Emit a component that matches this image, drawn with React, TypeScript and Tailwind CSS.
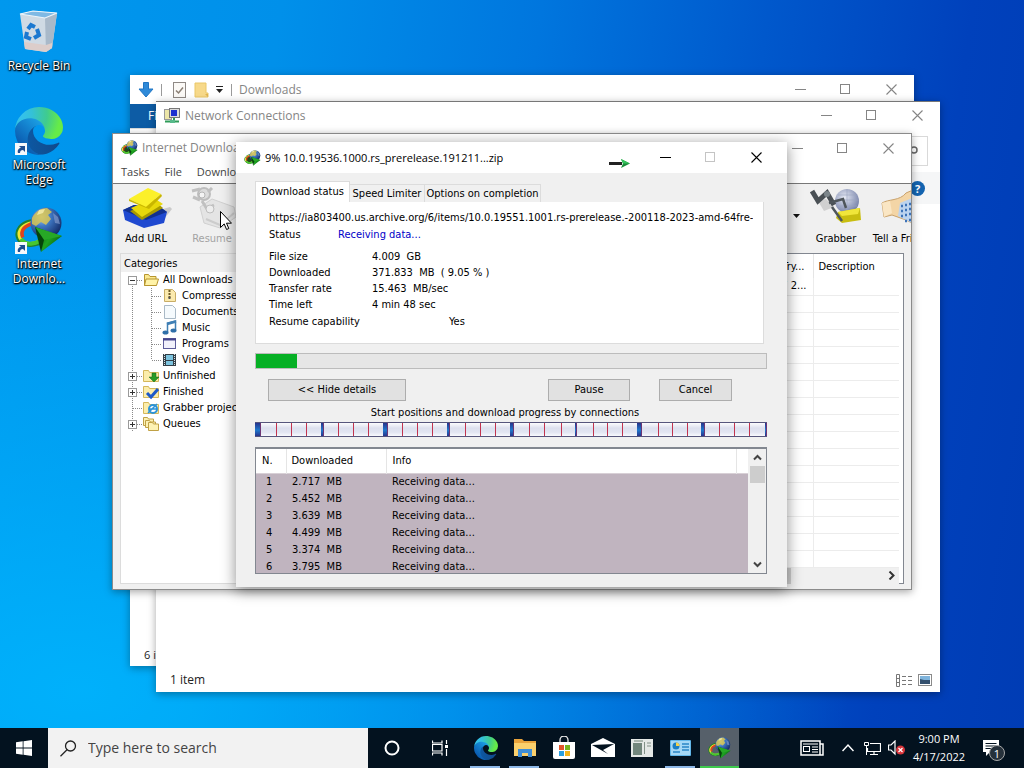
import type { ReactNode } from 'react';

/* ---------- logos and icons ---------- */

function EdgeLogo({ className }: { className: string }) {
  return (
    <svg viewBox="0 0 256 256" className={className} aria-hidden="true">
      <defs>
        <linearGradient id="edgeDark" x1="58" y1="177" x2="237" y2="177" gradientUnits="userSpaceOnUse">
          <stop offset="0" stopColor="#0c59a4" />
          <stop offset="1" stopColor="#114a8b" />
        </linearGradient>
        <linearGradient id="edgeMid" x1="153" y1="100" x2="46" y2="216" gradientUnits="userSpaceOnUse">
          <stop offset="0" stopColor="#1b9de2" />
          <stop offset="0.5" stopColor="#127cca" />
          <stop offset="1" stopColor="#0b5cb0" />
        </linearGradient>
        <radialGradient id="edgeTop" cx="26" cy="46" r="230" gradientUnits="userSpaceOnUse">
          <stop offset="0" stopColor="#35c1f1" />
          <stop offset="0.3" stopColor="#34c1d8" />
          <stop offset="0.65" stopColor="#3fcb8f" />
          <stop offset="0.95" stopColor="#66eb48" />
        </radialGradient>
      </defs>
      <g transform="translate(-4.63 -4.92)">
        <path fill="url(#edgeDark)" d="M235.68 195.46a93.73 93.73 0 0 1-10.54 4.71 101.87 101.87 0 0 1-35.9 6.46c-47.32 0-88.54-32.55-88.54-74.32A31.48 31.48 0 0 1 117.13 105c-42.8 1.8-53.8 46.4-53.8 72.53 0 73.88 68.09 81.37 82.76 81.37 7.91 0 19.84-2.3 27-4.56l1.31-.44a128.34 128.34 0 0 0 66.6-52.8 4 4 0 0 0-5.32-5.64Z" />
        <path fill="url(#edgeMid)" d="M110.34 246.34A79.2 79.2 0 0 1 87.6 225a80.72 80.72 0 0 1 29.53-120c3.12-1.47 8.45-4.13 15.54-4a32.35 32.35 0 0 1 25.69 13 31.88 31.88 0 0 1 6.36 18.66c0-.21 24.46-79.6-80-79.6-43.9 0-80 41.66-80 78.21a130.15 130.15 0 0 0 12.11 56 128 128 0 0 0 156.38 67.11 75.55 75.55 0 0 1-62.78-8Z" />
        <path fill="url(#edgeTop)" d="M156.94 153.78c-.81 1.05-3.3 2.5-3.3 5.66 0 2.61 1.7 5.12 4.72 7.23 14.38 10 41.49 8.68 41.56 8.68a59.56 59.56 0 0 0 30.27-8.35 61.38 61.38 0 0 0 30.43-52.88c.26-22.41-8-37.31-11.34-43.91C228.09 28.76 182.35 4.92 132.61 4.92a128 128 0 0 0-128 126.2c.48-36.54 36.8-66.05 80-66.05 3.5 0 23.46.34 42 10.07 16.34 8.58 24.9 18.94 30.85 29.21 6.18 10.67 7.28 24.15 7.28 29.52s-2.74 13.33-7.8 19.91Z" />
      </g>
    </svg>
  );
}

function IdmLogo({ className, small = false }: { className: string; small?: boolean }) {
  return (
    <svg viewBox="0 0 48 46" className={className} aria-hidden="true">
      <defs>
        <radialGradient id="idmGlobe" cx="0.35" cy="0.3" r="0.75">
          <stop offset="0" stopColor="#a9cdf0" />
          <stop offset="0.4" stopColor="#3f78c4" />
          <stop offset="1" stopColor="#132a66" />
        </radialGradient>
        <linearGradient id="idmArrow" x1="0" y1="0" x2="1" y2="0.6">
          <stop offset="0" stopColor="#064a08" />
          <stop offset="0.6" stopColor="#1ea322" />
          <stop offset="1" stopColor="#0a5c10" />
        </linearGradient>
      </defs>
      {small && <ellipse cx="17" cy="26" rx="13" ry="11" fill="#1f4a1c" />}
      <g fill="none" transform="rotate(-14 17 26)">
        <ellipse cx="17" cy="26" rx="15.500" ry="12.500" stroke="#23822b" strokeWidth="2.500" />
        <ellipse cx="17" cy="26" rx="13.200" ry="10.200" stroke="#f3e62e" strokeWidth="3" />
        <path d="M7 28 C6 20 12 17 22 17" stroke="#e2421c" strokeWidth="3.500" />
        <path d="M5 29 C8 38 20 38 28 33" stroke="#48c62f" strokeWidth="4" />
      </g>
      <circle cx="31" cy="16" r="15.500" fill="url(#idmGlobe)" />
      <path d="M17 11 C20 5 26 1 32 1 L37 5 L33 8 L36 12 L31 18 L26 15 L21 19 L17 17 Z" fill="#d9c552" opacity="0.85" />
      <path d="M24 3 L30 2 L28 6 L22 8 Z" fill="#f6efae" opacity="0.8" />
      <path d="M38 6 L43 10 L45 17 L40 16 Z" fill="#7f97cb" opacity="0.7" />
      <path d="M20 20 L47 29 L26 45 L28 33 Z" fill="url(#idmArrow)" />
      <path d="M20 20 L47 29 L29 33 Z" fill="#27a826" />
      <path d="M20 20 L29 33 L26 45 Z" fill="#05440a" />
    </svg>
  );
}

function RecycleBin() {
  return (
    <svg viewBox="0 0 40 44" className="h-11 w-10" aria-hidden="true">
      <path d="M1 4 L14 1 L38 3 L33 38 L27 42 L6 39 Z" fill="#cfdae4" />
      <path d="M26 8 L38 3 L33 38 L27 42 Z" fill="#a9b9c9" />
      <path d="M1 4 L14 1 L38 3 L26 8 Z" fill="#7fb9e4" stroke="#eef5fa" strokeWidth="1.200" />
      <path d="M5 32 L27 35 L33 33 L33 38 L27 42 L6 39 Z" fill="#dccdca" />
      <g fill="none" stroke="#1b78d0" strokeWidth="4">
        <path d="M9 19 L12 15 L16 17" />
        <path d="M18 19 L20 25 L15 28" />
        <path d="M12 29 L7 27 L8 22" />
      </g>
    </svg>
  );
}

function Shortcut() {
  return (
    <svg viewBox="0 0 12 12" className="absolute bottom-0 left-0 h-3 w-3" aria-hidden="true">
      <rect width="12" height="12" fill="#f5f8fb" />
      <path d="M3 10 C2 7 4 5 6 5 L4 3 H10 V9 L8 7 C6 7 5 8 5 10 Z" fill="#1f4f92" />
    </svg>
  );
}

function Svg({ size, children, className = '' }: { size: number; children: ReactNode; className?: string }) {
  return (
    <svg width={size} height={size} viewBox={`0 0 ${size} ${size}`} className={`shrink-0 ${className}`} aria-hidden="true">
      {children}
    </svg>
  );
}

/* ---------- window parts ---------- */

function Captions({ active = false, noMax = false }: { active?: boolean; noMax?: boolean }) {
  const tone = active ? 'text-black' : 'text-[#858585]';
  return (
    <div className={`ml-auto flex shrink-0 self-stretch ${tone}`}>
      <button type="button" aria-label="Minimize" className="grid w-[45px] place-items-center">
        <Svg size={11}><path d="M0 5.500h11" stroke="currentColor" /></Svg>
      </button>
      <button type="button" aria-label="Maximize" className={`grid w-[45px] place-items-center ${noMax ? 'text-[#c4c4c4]' : ''}`}>
        <Svg size={11}><rect x="0.500" y="0.500" width="9" height="9" fill="none" stroke="currentColor" /></Svg>
      </button>
      <button type="button" aria-label="Close" className="grid w-[46px] place-items-center">
        <Svg size={11}><path d="M0.500 0.500l10 10M10.500 0.500l-10 10" stroke="currentColor" strokeWidth="1.100" /></Svg>
      </button>
    </div>
  );
}

const shade = 'shadow-[0_2px_8px_rgba(0,0,0,0.35)]';

function DownloadsWindow() {
  return (
    <section aria-label="Downloads" className={`absolute left-[130px] top-[75px] flex h-[591px] w-[784px] flex-col bg-white ${shade}`}>
      <header className="flex h-[29px] items-center pl-2 text-xs text-[#858585]">
        <Svg size={16}><path d="M5.500 0.500h5v6.500h4.500L8 15 1 7h4.500z" fill="#2f8ad8" stroke="#2076c4" /></Svg>
        <span className="ml-[7px] h-3 w-px bg-[#9a9a9a]" />
        <Svg size={16} className="ml-[9px]"><rect x="2.500" y="0.500" width="12" height="15" fill="#fbf9f6" stroke="#8f8985" /><path d="M5 8.500l2.500 2.500L12 5.500" fill="none" stroke="#8a7f75" strokeWidth="1.500" /></Svg>
        <Svg size={16} className="ml-[7px]"><path d="M1 1h11v10h2v4H1z" fill="#f7d98a" stroke="#eac766" /><path d="M11 12h3v3" fill="#e0b450" /></Svg>
        <Svg size={9} className="ml-[5px]"><path d="M1 1.500h7" stroke="#222" /><path d="M1 4h7L4.500 8z" fill="#222" /></Svg>
        <span className="ml-[7px] h-3 w-px bg-[#9a9a9a]" />
        <h2 className="ml-[7px]">Downloads</h2>
        <Captions />
      </header>
      <div className="flex h-6 bg-white">
        <button type="button" className="w-[56px] bg-[#0d5ca5] pl-[18px] text-left text-xs text-white">File</button>
      </div>
      <div className="flex-1 border-t border-[#dadbdc] bg-white" />
      <footer className="flex h-[22px] items-center pl-[14px] text-[11px] text-[#222]">6 items</footer>
    </section>
  );
}

function NetworkWindow() {
  return (
    <section aria-label="Network Connections" className={`absolute left-[156px] top-[101px] flex h-[591px] w-[784px] flex-col bg-white ${shade}`}>
      <header className="flex h-7 items-center border-t border-[#777] pl-2 text-xs text-[#858585]">
        <Svg size={16}>
          <rect x="0.500" y="1.500" width="7" height="10" fill="#ece6a8" stroke="#999" />
          <rect x="5.500" y="0.500" width="10" height="9" fill="#dcdcdc" stroke="#777" />
          <rect x="7" y="2" width="6" height="6" fill="#1c2fd0" />
          <path d="M10 10v3M1 13.500h14" stroke="#2f9b58" strokeWidth="2" />
          <rect x="6" y="12" width="5" height="3" fill="#56b98a" />
        </Svg>
        <h2 className="ml-[5px]">Network Connections</h2>
        <Captions />
      </header>
      <div className="flex h-[43px] items-center pr-3">
        <label className="relative ml-auto flex h-[30px] w-[180px] items-center border border-[#d9d9d9]">
          <input aria-label="Search" className="w-full bg-transparent outline-none" />
          <Svg size={13} className="mr-1"><circle cx="4" cy="6" r="3" fill="none" stroke="#666" strokeWidth="1.500" /></Svg>
        </label>
      </div>
      <div className="flex h-8 items-center bg-[#f5f6f7] pr-[15px]">
        <button type="button" aria-label="Help" className="ml-auto grid h-[15px] w-[15px] place-items-center rounded-full bg-[#1464b0] text-[11px] font-bold leading-none text-white">?</button>
      </div>
      <div className="flex-1 bg-white" />
      <footer className="flex h-6 items-center gap-[6px] pl-[14px] pr-2 text-xs text-[#222]">
        <span className="mr-auto">1 item</span>
        <svg width="16" height="13" viewBox="0 0 16 13" aria-hidden="true">
          <path d="M0.500 0.500h3v12h-3zM0.500 4.500h3M0.500 8.500h3" fill="none" stroke="#777" />
          <path d="M6 2.500h4M12 2.500h4M6 6.500h4M12 6.500h4M6 10.500h4M12 10.500h4" stroke="#777" />
        </svg>
        <svg width="14" height="12" viewBox="0 0 14 12" aria-hidden="true">
          <rect x="0.500" y="0.500" width="13" height="11" fill="#fff" stroke="#8a8a8a" />
          <rect x="2" y="2" width="10" height="4" fill="#7fb4dc" />
          <path d="M2 5l4 1h6v4H2z" fill="#33506e" />
        </svg>
      </footer>
    </section>
  );
}

/* ---------- IDM main window ---------- */

type Guide = 'minus' | 'plus' | 'tee' | 'line' | 'end' | 'none';

function TreeGuide({ kind }: { kind: Guide }) {
  const boxed = kind === 'minus' || kind === 'plus';
  return (
    <svg width="19" height="16" viewBox="0 0 19 16" className="shrink-0" aria-hidden="true">
      {kind !== 'none' && (
        <path d={kind === 'end' ? 'M8.500 0v8' : kind === 'minus' ? 'M8.500 8v8' : 'M8.500 0v16'} stroke="#8a8a8a" strokeDasharray="1 1" />
      )}
      {kind !== 'none' && kind !== 'line' && <path d="M9 8.500h10" stroke="#8a8a8a" strokeDasharray="1 1" />}
      {boxed && <rect x="4.500" y="4.500" width="8" height="8" fill="#fff" stroke="#9a9a9a" />}
      {boxed && <path d="M6 8.500h5" stroke="#333" />}
      {kind === 'plus' && <path d="M8.500 6v5" stroke="#333" />}
    </svg>
  );
}

const folder = (
  <>
    <path d="M1.500 13.500v-11h4l1.500 2h6v9z" fill="#fbe98f" stroke="#b7952f" />
    <path d="M3 7h12.500l-2 6.500h-12z" fill="#fff3a8" stroke="#b7952f" />
  </>
);
const plainFolder = <path d="M0.500 13.500v-11h5l1 2h9v9z" fill="#fbedab" stroke="#d5b75a" />;

const tree: { name: string; guides: Guide[]; icon: ReactNode }[] = [
  { name: 'All Downloads', guides: ['minus'], icon: folder },
  { name: 'Compressed', guides: ['line', 'tee'], icon: <><path d="M2.500 1.500h8l3 3v9h-11z" fill="#fbeaae" stroke="#c8ad66" /><path d="M7.500 2v9" stroke="#6f5b25" strokeWidth="2" strokeDasharray="2 1" /><rect x="6.500" y="9" width="2" height="2" fill="#555" /></> },
  { name: 'Documents', guides: ['line', 'tee'], icon: <path d="M2.500 1.500h8l3 3v10h-11z" fill="#f5fafd" stroke="#a9b9c6" /> },
  { name: 'Music', guides: ['line', 'tee'], icon: <><path d="M5.500 12V3l8-2v9" fill="none" stroke="#3f7fb5" strokeWidth="1.500" /><path d="M5 4l9-2.500" stroke="#3f7fb5" strokeWidth="2.500" /><ellipse cx="3.500" cy="12.500" rx="3" ry="2" fill="#2f6fa8" /><ellipse cx="11.500" cy="10.500" rx="3" ry="2" fill="#2f6fa8" /></> },
  { name: 'Programs', guides: ['line', 'tee'], icon: <><rect x="1.500" y="2.500" width="12" height="10" fill="#f1f1fb" stroke="#5d5d9a" /><path d="M1 3.500h13" stroke="#44448c" strokeWidth="2" /></> },
  { name: 'Video', guides: ['line', 'end'], icon: <><rect x="1" y="2" width="13" height="12" fill="#333f46" /><rect x="4" y="3" width="7" height="5" fill="#7cc3de" /><rect x="4" y="9" width="7" height="4" fill="#7cc3de" /><path d="M2.500 2v12M12.500 2v12" stroke="#d6e2e8" strokeDasharray="1 1" /></> },
  { name: 'Unfinished', guides: ['plus'], icon: <>{plainFolder}<path d="M9 5h4v4h3l-5 5-5-5h3z" fill="#299b28" stroke="#146414" strokeWidth="0.500" /></> },
  { name: 'Finished', guides: ['plus'], icon: <>{plainFolder}<path d="M4 9l4 4 7-8" fill="none" stroke="#1d59c8" strokeWidth="3" /></> },
  { name: 'Grabber projects', guides: ['tee'], icon: <>{plainFolder}<circle cx="10" cy="9" r="4" fill="#fff" stroke="#2b93d8" strokeWidth="2" /><path d="M7 9h6M14 4l-9 9" stroke="#2b93d8" strokeWidth="1.500" /></> },
  { name: 'Queues', guides: ['plus'], icon: <><path d="M0.500 9.500v-8h4l1 1.500h5v6.500z" fill="#fdf2b4" stroke="#c0a145" /><path d="M2.500 11.500v-7h4l1 1.500h5v5.500z" fill="#fdf2b4" stroke="#c0a145" /><path d="M5.500 14.500v-8h4l1 1.500h5v6.500z" fill="#fdf2b4" stroke="#c0a145" /></> },
];

function ToolButton({ label, muted, children }: { label: string; muted?: boolean; children: ReactNode }) {
  return (
    <button type="button" className={`flex w-[66px] shrink-0 flex-col items-center whitespace-nowrap ${muted ? 'text-[#a3a3a3]' : 'text-black'}`}>
      <svg width="52" height="44" viewBox="0 0 52 44" aria-hidden="true">{children}</svg>
      <span className="leading-4">{label}</span>
    </button>
  );
}

const blankRows = Array.from({ length: 16 }, (_, i) => i);

function IdmWindow() {
  return (
    <section aria-label="Internet Download Manager" className={`absolute left-[112px] top-[133px] flex h-[457px] w-[800px] flex-col overflow-hidden border border-[#8b8b8b] bg-[#f0f0f0] ${shade}`}>
      <header className="flex h-7 items-center bg-white pl-2 text-xs text-[#858585]">
        <IdmLogo small className="h-4 w-[17px]" />
        <h2 className="ml-1 whitespace-nowrap">Internet Download Manager</h2>
        <Captions />
      </header>
      <nav className="flex h-[22px] items-center gap-[15px] border-b border-[#777] bg-white pl-2 text-[11px] text-[#444]">
        <button type="button">Tasks</button>
        <button type="button">File</button>
        <button type="button">Downloads</button>
      </nav>
      <div className="flex h-[69px] w-[calc(100%+24px)] pt-[3px] font-['DejaVu_Sans_Condensed','DejaVu_Sans',sans-serif] text-[11px]">
        <ToolButton label="Add URL">
          <path d="M36 24 L50 20 L52 22 L44 32 L30 36 Z" fill="#b9b9b9" opacity="0.7" />
          <path d="M3 23 L5 33 L24 41 L44 36 L47 25 L40 20 L14 18 Z" fill="#1f49d0" />
          <path d="M3 23 L14 18 L40 20 L47 25 L26 33 Z" fill="#12308f" />
          <path d="M10 24 L36 15 L43 21 L22 33 Z" fill="#a89a00" />
          <path d="M11 21 L34 11 L43 17 L22 30 Z" fill="#e8d80a" />
          <path d="M9 12 L28 1 L41 7 L26 20 Z" fill="#fbf02a" />
          <path d="M26 20 L41 7 L42 9 L29 22 L9 14 L9 12 Z" fill="#c9b600" />
        </ToolButton>
        <ToolButton label="Resume" muted>
          <path d="M14 20 L26 12 L48 20 L50 30 L34 41 L18 36 Z" fill="#e4e4e4" stroke="#d0d0d0" />
          <circle cx="18" cy="7" r="6" fill="#dcdcdc" stroke="#bdbdbd" strokeWidth="2" />
          <circle cx="16" cy="8" r="3" fill="#f4f4f4" stroke="#b5b5b5" />
          <path d="M6 4 L14 2 M7 10 L14 13 M16 14 L21 22 M22 5 L26 1 M20 22 L28 18" stroke="#c0c0c0" strokeWidth="3" />
          <circle cx="24" cy="22" r="4" fill="#ededed" stroke="#bdbdbd" />
          <path d="M20 32 L34 38 L48 26" fill="none" stroke="#cccccc" strokeWidth="2" />
        </ToolButton>
        <div className="flex-1" />
        <Svg size={7} className="mr-[3px] mt-[26px]"><path d="M0 1h7L3.500 5z" fill="#111" /></Svg>
        <ToolButton label="Grabber">
          <defs>
            <radialGradient id="grabGlobe" cx="0.4" cy="0.35" r="0.7">
              <stop offset="0" stopColor="#e6eaf4" />
              <stop offset="1" stopColor="#6f7ba4" />
            </radialGradient>
          </defs>
          <path d="M8 14 L16 12 L24 20 L14 24 Z" fill="#d0d0d0" />
          <circle cx="37" cy="14" r="12" fill="url(#grabGlobe)" />
          <path d="M26 13 H49 M28 8 H46 M28 19 H47 M37 2 V26" stroke="#9ba5c0" strokeWidth="0.600" fill="none" />
          <path d="M28 25 L50 21 L51 33 L32 36 L26 31 Z" fill="#c9be10" />
          <path d="M28 25 L50 21 L48 27 L32 29 Z" fill="#f0e63a" />
          <path d="M2 4 L8 14 L17 6 L24 18" fill="none" stroke="#4a5055" strokeWidth="5" />
          <path d="M19 16 L33 12 L36 21 M22 20 L32 34" fill="none" stroke="#4f565b" strokeWidth="2.500" />
          <circle cx="17" cy="7" r="3" fill="#7d868b" />
        </ToolButton>
        <ToolButton label="Tell a Friend">
          <path d="M6 16 C12 12 24 14 30 6 L44 0 V40 L30 33 L16 28 L8 30 Z" fill="#f3d5a6" stroke="#c9a26c" />
          <path d="M6 16 L8 30 L16 26 L14 14 Z" fill="#fae6c4" />
          <path d="M24 16 L44 8 V40 L22 29 Z" fill="#bcd3ee" />
          <path d="M25 19h2m2-1h2m2-1h2m-10 7h2m2-1h2m2-1h2m-10 7h2m2-1h2m2-1h2m-6 7h2m2-1h2" stroke="#3d73b8" strokeWidth="2.500" />
        </ToolButton>
      </div>
      <div className="flex min-h-0 flex-1 gap-1 px-[7px] pb-[5px] font-['DejaVu_Sans_Condensed','DejaVu_Sans',sans-serif] text-[11px] leading-4">
        <div className="flex w-[160px] shrink-0 flex-col overflow-hidden border border-[#dcdcdc] bg-white">
          <div className="bg-[#f0f0f0] pl-[3px] pt-px leading-[17px] text-black">Categories</div>
          <ul className="pl-[3px]">
            {tree.map((n) => (
              <li key={n.name} className="flex h-4 items-center whitespace-nowrap">
                {n.guides.map((g, i) => <TreeGuide key={i} kind={g} />)}
                <Svg size={16}>{n.icon}</Svg>
                <span className="ml-1">{n.name}</span>
              </li>
            ))}
          </ul>
        </div>
        <div className="flex min-w-0 flex-1 flex-col border border-[#828790] bg-white pr-1">
          <table className="w-full table-fixed border-collapse text-left">
            <thead>
              <tr className="h-6">
                <th aria-label="File name" />
                <th className="w-16 border-r border-[#e5e5e5] pr-2 pt-[2px] text-right font-normal">Last Try...</th>
                <th className="w-[86px] pl-[5px] pt-[2px] font-normal">Description</th>
              </tr>
            </thead>
            <tbody>
              <tr className="h-[17px] border-b border-[#ececec]">
                <td />
                <td className="border-r border-[#ececec] p-0 pr-[6px] text-right">Apr 17 2...</td>
                <td />
              </tr>
              {blankRows.map((i) => (
                <tr key={i} className="h-[17px] border-b border-[#ececec]">
                  <td />
                  <td className="border-r border-[#ececec]" />
                  <td />
                </tr>
              ))}
            </tbody>
          </table>
          <div className="mt-auto flex h-4 shrink-0 items-center bg-[#f0f0f0] pr-[3px]">
            <span className="h-4 flex-1 bg-[#cdcdcd]" />
            <span className="w-24" />
            <Svg size={9}><path d="M2.500 0.500l4 4-4 4" fill="none" stroke="#333" strokeWidth="2" /></Svg>
          </div>
        </div>
      </div>
    </section>
  );
}

/* ---------- download dialog ---------- */

const details: { label: string; value: string }[] = [
  { label: 'File size', value: '4.009  GB' },
  { label: 'Downloaded', value: '371.833  MB  ( 9.05 % )' },
  { label: 'Transfer rate', value: '15.463  MB/sec' },
  { label: 'Time left', value: '4 min 48 sec' },
];

const connections = ['2.717', '5.452', '3.639', '4.499', '3.374', '3.795'];

const redTicks = [21, 36, 51, 83, 98, 113, 147, 162, 177, 210, 225, 240, 274, 289, 306, 338, 352, 367, 403, 417, 432, 464, 479, 494];
const doneBlocks: [number, number][] = [[0, 6], [66, 3], [128, 5], [192, 3], [255, 4], [320, 2], [382, 5], [446, 4], [510, 2]];

function ConnectionsBar() {
  return (
    <svg viewBox="0 0 512 15" preserveAspectRatio="none" className="h-[15px] w-full" role="img" aria-label="Progress by connections">
      <defs>
        <linearGradient id="barBack" x1="0" y1="0" x2="0" y2="1">
          <stop offset="0" stopColor="#ffffff" />
          <stop offset="0.4" stopColor="#dde0ee" />
          <stop offset="0.7" stopColor="#e2e5f2" />
          <stop offset="1" stopColor="#fcfcff" />
        </linearGradient>
        <linearGradient id="barDone" x1="0" y1="0" x2="0" y2="1">
          <stop offset="0" stopColor="#27348c" />
          <stop offset="0.55" stopColor="#1f78cc" />
          <stop offset="1" stopColor="#27348c" />
        </linearGradient>
      </defs>
      <rect x="0.500" y="0.500" width="511" height="14" fill="url(#barBack)" stroke="#56567c" />
      {redTicks.map((x) => <rect key={x} x={x} y="1" width="1" height="13" fill="#c2334e" />)}
      {doneBlocks.map(([x, w]) => (
        <g key={x}>
          <rect x={x} y="1" width={w} height="13" fill="url(#barDone)" />
          <rect x={x + w - 1} y="1" width="1" height="13" fill="#6d3574" />
        </g>
      ))}
    </svg>
  );
}

const pushButton = 'h-[22px] border border-[#adadad] bg-[#e1e1e1] text-center text-black';

function DownloadDialog() {
  return (
    <section
      role="dialog"
      aria-label="Download progress"
      className="absolute left-[236px] top-[142px] flex h-[445px] w-[551px] flex-col bg-[#f0f0f0] font-['DejaVu_Sans_Condensed','DejaVu_Sans',sans-serif] text-[11px] leading-4 text-black shadow-[0_3px_14px_rgba(0,0,0,0.45)]"
    >
      <header className="flex h-[31px] shrink-0 items-center bg-white pl-2 pr-2 font-['Open_Sans','Noto_Sans',sans-serif]">
        <IdmLogo small className="h-4 w-[17px]" />
        <h1 className="ml-1 whitespace-nowrap">9% 10.0.19536.1000.rs_prerelease.191211...zip</h1>
        <svg width="22" height="10" viewBox="0 0 22 10" className="ml-auto mr-3 mt-3 shrink-0" aria-hidden="true">
          <rect x="0" y="3" width="13" height="3" fill="#222" />
          <path d="M12 0l9 4.500-9 4.500 2-4.500z" fill="#1a8f3a" />
          <path d="M12 0l9 4.500h-7z" fill="#35c45c" />
        </svg>
        <div className="flex self-stretch"><Captions active noMax /></div>
      </header>

      <div role="tablist" className="flex shrink-0 items-end pl-[19px] pt-2">
        <button role="tab" aria-selected="true" type="button" className="h-[21px] w-[95px] border border-b-0 border-[#dcdcdc] bg-white">Download status</button>
        <button role="tab" aria-selected="false" type="button" className="h-[18px] w-[75px] whitespace-nowrap border border-l-0 border-b-0 border-[#dcdcdc]">Speed Limiter</button>
        <button role="tab" aria-selected="false" type="button" className="h-[18px] w-[116px] whitespace-nowrap border border-l-0 border-b-0 border-[#dcdcdc]">Options on completion</button>
      </div>
      <div className="ml-[19px] mr-[23px] h-[142px] shrink-0 border border-t-0 border-[#dcdcdc] bg-white pl-[13px] pr-[10px] pt-2">
        <p className="overflow-hidden whitespace-nowrap">https://ia803400.us.archive.org/6/items/10.0.19551.1001.rs-prerelease.-200118-2023-amd-64fre-client</p>
        <dl>
          <div className="flex pt-px">
            <dt className="w-[69px]">Status</dt>
            <dd className="text-[#0000c8]">Receiving data...</dd>
          </div>
          <div className="pt-[6px]">
            {details.map((d) => (
              <div key={d.label} className="flex">
                <dt className="w-[103px]">{d.label}</dt>
                <dd className="whitespace-pre">{d.value}</dd>
              </div>
            ))}
          </div>
          <div className="flex pt-px">
            <dt className="w-[180px]">Resume capability</dt>
            <dd>Yes</dd>
          </div>
        </dl>
      </div>

      <div className="flex min-h-0 flex-1 flex-col pb-[13px] pl-[19px] pr-5 pt-[9px]">
        <div role="progressbar" aria-label="Downloaded" aria-valuenow={8} className="h-4 shrink-0 border border-[#bcbcbc] bg-[#e6e6e6]">
          <div className="h-full bg-[#06b025]" style={{ width: '8%' }} />
        </div>
        <div className="mt-[10px] flex shrink-0 pl-[13px] pr-[35px]">
          <button type="button" className={`${pushButton} w-[138px]`}>&lt;&lt; Hide details</button>
          <button type="button" className={`${pushButton} ml-auto w-[82px]`}>Pause</button>
          <button type="button" className={`${pushButton} ml-[29px] w-[73px]`}>Cancel</button>
        </div>
        <p className="mt-1 shrink-0 pr-3 text-center">Start positions and download progress by connections</p>
        <div className="mt-px flex shrink-0"><ConnectionsBar /></div>
        <div className="mt-[10px] flex min-h-0 flex-1 overflow-hidden border border-t-2 border-[#828790] bg-white">
          <div className="min-w-0 flex-1 overflow-hidden">
            <table className="w-full table-fixed border-collapse text-left">
              <thead>
                <tr className="h-6 border-b border-[#d8d0d6]">
                  <th className="w-[30px] border-r border-[#e5e5e5] p-0 pl-[6px] font-normal">N.</th>
                  <th className="w-[100px] border-r border-[#e5e5e5] p-0 pl-[5px] font-normal">Downloaded</th>
                  <th className="p-0 pl-[6px] font-normal">Info</th>
                  <th aria-label="End" className="w-3 border-l border-[#e5e5e5] p-0" />
                </tr>
              </thead>
              <tbody className="bg-[#c0b4bf]">
                {connections.map((c, i) => (
                  <tr key={c} className="h-[17px]">
                    <td className="p-0 pl-[10px]">{i + 1}</td>
                    <td className="whitespace-pre p-0 pl-[6px]">{`${c}  MB`}</td>
                    <td className="p-0 pl-[6px]" colSpan={2}>Receiving data...</td>
                  </tr>
                ))}
              </tbody>
            </table>
          </div>
          <div className="flex w-[18px] shrink-0 flex-col items-center bg-[#f0f0f0] py-1">
            <Svg size={9}><path d="M1 6.500l3.500-3.500L8 6.500" fill="none" stroke="#444" strokeWidth="2" /></Svg>
            <span className="mt-1 h-[17px] w-[15px] bg-[#cdcdcd]" />
            <Svg size={9} className="mt-auto"><path d="M1 2.500l3.500 3.500L8 2.500" fill="none" stroke="#444" strokeWidth="2" /></Svg>
          </div>
        </div>
      </div>
    </section>
  );
}

/* ---------- desktop and taskbar ---------- */

function DesktopIcon({ label, children }: { label: string; children: ReactNode }) {
  return (
    <button type="button" className="flex h-[99px] w-[78px] flex-col items-center gap-[2px] text-xs leading-[15px] text-white [text-shadow:0_1px_2px_#000,0_0_2px_#000,1px_1px_1px_#000]">
      <span className="relative grid h-12 w-12 place-items-center">{children}</span>
      <span className="w-16 text-center">{label}</span>
    </button>
  );
}

function TaskItem({ label, running = false, current = false, children }: { label: string; running?: boolean; current?: boolean; children: ReactNode }) {
  return (
    <button type="button" aria-label={label} className={`relative grid h-10 w-[39px] shrink-0 place-items-center ${current ? 'bg-[#56606a]' : ''}`}>
      {children}
      {running && <span className="absolute bottom-0 left-1 h-[2px] w-[30px] bg-[#8db8e8]" />}
      {current && <span className="absolute bottom-0 left-0 h-[2px] w-full bg-[#3fca4e]" />}
    </button>
  );
}

function Taskbar() {
  return (
    <footer className="flex h-10 items-center bg-[#03121f] text-white">
      <button type="button" aria-label="Start" className="grid h-10 w-12 place-items-center">
        <Svg size={16}><path d="M0 2.300L6.700 1.300V7.600H0zM7.500 1.200L16 0v7.600H7.500zM0 8.400h6.700v6.300L0 13.700zM7.500 8.400H16V16l-8.500-1.200z" fill="#fff" /></Svg>
      </button>
      <label className="flex h-10 w-80 shrink-0 items-center bg-[#f2f2f2] pl-3">
        <svg width="17" height="17" viewBox="0 0 17 17" aria-hidden="true"><circle cx="10.500" cy="6" r="5" fill="none" stroke="#222" strokeWidth="1.300" /><path d="M7 9.700L0.500 16.200" stroke="#222" strokeWidth="1.300" /></svg>
        <input aria-label="Search" placeholder="Type here to search" className="ml-[11px] w-60 bg-transparent text-sm outline-none placeholder:text-[#444]" />
      </label>
      <div className="ml-1 flex">
        <TaskItem label="Cortana"><Svg size={16}><circle cx="8" cy="8" r="6.500" fill="none" stroke="#fff" strokeWidth="2" /></Svg></TaskItem>
        <div className="ml-[9px] flex">
          <TaskItem label="Task view">
            <Svg size={16}><path d="M0.500 0.500v2.500h9.500V0.500M0.500 15.500V13h9.500v2.500M0.500 4.500h9.500v6.500H0.500zM14.500 0v4M14.500 9v7" fill="none" stroke="#fff" strokeWidth="1.200" /><rect x="13" y="5" width="3" height="3" fill="#fff" /></Svg>
          </TaskItem>
        </div>
        <div className="ml-[7px] flex">
          <TaskItem label="Edge" running><EdgeLogo className="h-6 w-6" /></TaskItem>
          <TaskItem label="File Explorer" running>
            <svg width="22" height="20" viewBox="0 0 22 20" aria-hidden="true">
              <path d="M0 1h8l2 2h12v15H0z" fill="#e9a33b" />
              <path d="M0 5h22v13H0z" fill="#fbd06c" />
              <path d="M4 19v-8h14v8h-4v-4H8v4z" fill="#3f8ed6" />
            </svg>
          </TaskItem>
          <TaskItem label="Store">
            <svg width="24" height="24" viewBox="0 0 24 24" aria-hidden="true">
              <path d="M8 7V4a4 4 0 0 1 8 0v3" fill="none" stroke="#e8e8e8" strokeWidth="1.300" />
              <path d="M1 6h22v15q0 2-2 2H3q-2 0-2-2z" fill="#fff" />
              <rect x="7" y="9" width="5" height="5" fill="#e2562b" /><rect x="13" y="9" width="5" height="5" fill="#78b51e" />
              <rect x="7" y="15" width="5" height="5" fill="#2a9fe0" /><rect x="13" y="15" width="5" height="5" fill="#f2b41e" />
            </svg>
          </TaskItem>
          <TaskItem label="Mail">
            <svg width="24" height="20" viewBox="0 0 24 20" aria-hidden="true"><path d="M0 6l12-6 12 6v13H0z" fill="#fff" /><path d="M1 7l22-1-11 6 5 4z" fill="#03121f" /></svg>
          </TaskItem>
          <TaskItem label="Viewer">
            <svg width="22" height="18" viewBox="0 0 22 18" aria-hidden="true"><rect width="22" height="18" fill="#e4e8e6" /><rect x="2" y="4" width="9" height="12" fill="#71867c" /><rect x="3" y="1" width="9" height="2" fill="#a9b5ae" /><path d="M13.500 3v12M16 4h4M16 7h4" stroke="#829188" /></svg>
          </TaskItem>
          <TaskItem label="Control Panel" running>
            <svg width="21" height="16" viewBox="0 0 21 16" aria-hidden="true"><rect width="21" height="16" rx="1" fill="#62b7ea" /><rect x="1" y="1" width="19" height="14" fill="#a5d8f6" /><circle cx="6" cy="6" r="3.500" fill="#1b7fc4" /><path d="M6 6V2.500A3.500 3.500 0 0 1 9.500 6z" fill="#f4d24c" /><path d="M12 4h7M12 7h7M12 10h7M3 12h7" stroke="#2a85c6" strokeWidth="1.500" /></svg>
          </TaskItem>
          <TaskItem label="Internet Download Manager" current><IdmLogo className="h-[22px] w-[23px]" /></TaskItem>
        </div>
      </div>
      <div className="ml-auto flex items-center">
        <svg width="24" height="16" viewBox="0 0 24 16" aria-hidden="true">
          <path d="M1 1h19v14H1zM20 4h3v11h-4" fill="none" stroke="#fff" strokeWidth="1.500" />
          <rect x="3.500" y="6.500" width="6" height="5" fill="none" stroke="#fff" />
          <path d="M3 4h15M12 7h6M12 9.500h6M12 12h6" stroke="#fff" strokeWidth="1.200" />
        </svg>
        <Svg size={12} className="ml-[18px]"><path d="M0.500 9l5.500-6 5.500 6" fill="none" stroke="#fff" strokeWidth="1.500" /></Svg>
        <svg width="17" height="15" viewBox="0 0 17 15" className="ml-[10px]" aria-hidden="true">
          <path d="M6 2.500h10.500v8H3.500V7M10 10.500v3M6 13.500h8" fill="none" stroke="#fff" strokeWidth="1.200" />
          <path d="M0.500 1.500h4v3h-4zM2.500 5v9" fill="none" stroke="#fff" />
        </svg>
        <svg width="18" height="16" viewBox="0 0 18 16" className="ml-[7px]" aria-hidden="true">
          <path d="M0.500 5v5h2.500l4 4V1L3 5z" fill="none" stroke="#fff" strokeWidth="1.200" />
          <circle cx="12.500" cy="10" r="4.500" fill="#d8343a" />
          <path d="M10.500 8l4 4M14.500 8l-4 4" stroke="#fff" strokeWidth="1.200" />
        </svg>
        <time className="w-[66px] text-center text-[11px] leading-[18px]">9:00 PM<br />4/17/2022</time>
        <div className="relative ml-2 w-11">
          <svg width="18" height="18" viewBox="0 0 18 18" className="ml-[2px]" aria-hidden="true"><path d="M1 1h16v12H8l-4 4v-4H1z" fill="#fff" /><path d="M3.500 4.500h11M3.500 7h11M3.500 9.500h8" stroke="#03121f" strokeWidth="1.200" /></svg>
          <span className="absolute left-[9px] top-[6px] grid h-4 w-4 place-items-center rounded-full border border-[#a8a8a8] bg-[#26313b] text-[11px] leading-none">1</span>
        </div>
      </div>
    </footer>
  );
}

export default function App() {
  return (
    <main className="flex min-h-screen flex-col overflow-hidden bg-[radial-gradient(75%_60%_at_8%_90%,rgba(0,184,255,0.8)_0%,rgba(0,184,255,0)_100%),linear-gradient(98deg,#0098ee_0%,#0090ea_25%,#0076de_48%,#0058cc_68%,#0041bc_86%,#003cb4_100%)] font-['Open_Sans','Noto_Sans',sans-serif]">
      <div className="relative flex-1">
        <div className="flex flex-col pt-2">
          <DesktopIcon label="Recycle Bin"><RecycleBin /></DesktopIcon>
          <DesktopIcon label="Microsoft Edge"><EdgeLogo className="h-12 w-12" /><Shortcut /></DesktopIcon>
          <DesktopIcon label="Internet Downlo..."><IdmLogo className="h-[46px] w-12" /><Shortcut /></DesktopIcon>
        </div>
        <DownloadsWindow />
        <NetworkWindow />
        <IdmWindow />
        <DownloadDialog />
        <svg width="12" height="19" viewBox="0 0 12 19" className="absolute left-[220px] top-[211px]" aria-hidden="true">
          <path d="M0.500 0.500v16l3.700-3.600 2.400 5.600 2.200-1-2.300-5.300h5z" fill="#fff" stroke="#000" />
        </svg>
      </div>
      <Taskbar />
    </main>
  );
}
